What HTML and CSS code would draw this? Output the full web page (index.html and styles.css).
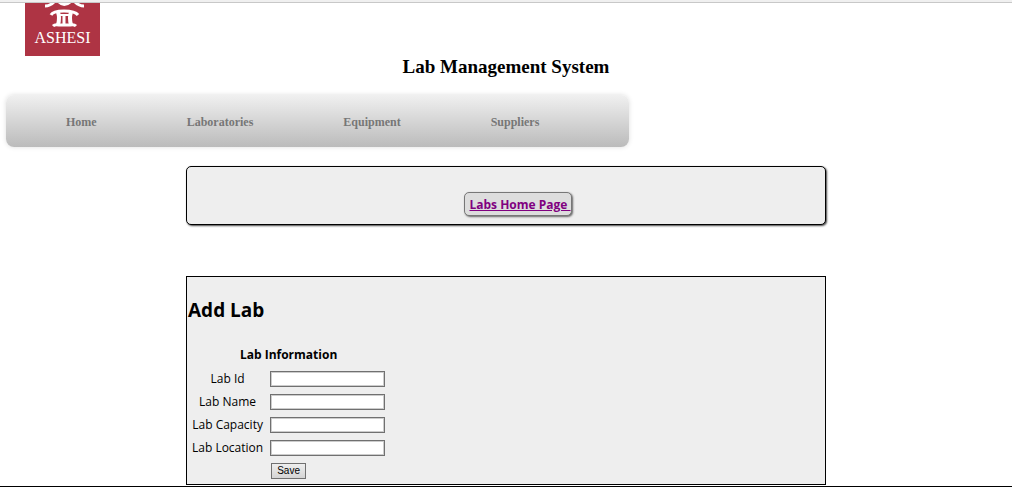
FILE: index.html
```html
<!DOCTYPE html>
<html lang="en">
<head>
<meta charset="utf-8">
<title>Lab Management System</title>
<link rel="stylesheet" href="styles.css">
</head>
<body>
<header class="masthead">
  <div class="logo">
    <svg class="logo-mark" viewBox="0 0 75 26" aria-hidden="true">
      <g fill="none" stroke="#fff">
        <path d="M29 -1Q25 3 20 3" stroke-width="3"/>
        <path d="M50 -1Q54 3 59 3" stroke-width="3"/>
        <path d="M34 -1Q39 4 45 -1" stroke-width="3"/>
        <path d="M26 12Q28 8 39 8T53 12" stroke-width="3"/>
        <path d="M33 9Q35 15 33 22M46 9Q44 15 46 22" stroke-width="4"/>
        <path d="M39 12V22" stroke-width="3"/>
        <path d="M33 12H46" stroke-width="2"/>
        <path d="M28 23Q30 21 34 22H45Q49 21 51 23" stroke-width="3"/>
      </g>
    </svg>
    <span class="logo-name">ASHESI</span>
  </div>
  <h1 class="title">Lab Management System</h1>
</header>
<nav class="menu">
  <a href="#home">Home</a>
  <a href="#laboratories">Laboratories</a>
  <a href="#equipment">Equipment</a>
  <a href="#suppliers">Suppliers</a>
</nav>
<main class="content">
  <div class="toolbar">
    <a class="tab" href="#labs">Labs Home Page&nbsp;</a>
  </div>
  <section class="panel">
    <h2 class="panel-title">Add Lab</h2>
    <form>
      <table class="form-table">
        <thead>
          <tr><th colspan="2">Lab Information</th></tr>
        </thead>
        <tbody>
          <tr><td><label for="lab-id">Lab Id</label></td><td><input class="field" id="lab-id" type="text"></td></tr>
          <tr><td><label for="lab-name">Lab Name</label></td><td><input class="field" id="lab-name" type="text"></td></tr>
          <tr><td><label for="lab-capacity">Lab Capacity</label></td><td><input class="field" id="lab-capacity" type="text"></td></tr>
          <tr><td><label for="lab-location">Lab Location</label></td><td><input class="field" id="lab-location" type="text"></td></tr>
          <tr><td></td><td><button class="save" type="submit">Save</button></td></tr>
        </tbody>
      </table>
    </form>
  </section>
</main>
<footer class="footer"></footer>
</body>
</html>
```

FILE: styles.css
```css
* {
  box-sizing: border-box;
}

body {
  margin: 0;
  background: #fff;
  color: #000;
  border-top: 2px solid #f0f0f0;
  font-family: "Liberation Serif", serif;
}

.masthead {
  border-top: 1px solid #c8c8c8;
}

.logo {
  display: flex;
  flex-direction: column;
  align-items: center;
  width: 75px;
  height: 53px;
  margin-left: 25px;
  background: #ae3444;
  color: #fff;
}

.logo-mark {
  width: 75px;
  height: 26px;
}

.logo-name {
  font-size: 16px;
  line-height: 18px;
}

.title {
  margin: 0;
  text-align: center;
  font-size: 19px;
  line-height: 22px;
}

.menu {
  display: flex;
  align-items: center;
  gap: 90px;
  width: 62%;
  max-width: 623px;
  height: 52px;
  margin: 17px 0 0 6px;
  padding: 2px 60px 0;
  border-radius: 8px;
  background: linear-gradient(#f0f0f0, #bbb);
  box-shadow: 0 0 5px #ddd;
}

.menu a {
  color: #777;
  font-size: 12px;
  font-weight: bold;
  text-decoration: none;
}

.content {
  max-width: 640px;
  margin: 19px auto 0;
  font-family: "Comic Sans MS", "Open Sans", sans-serif;
  font-size: 12px;
}

.toolbar {
  display: flex;
  justify-content: center;
  padding: 25px 0 8px 24px;
  border: 1px solid #000;
  border-radius: 5px;
  background: #eee;
  box-shadow: 1px 1px 2px #444;
}

.tab {
  padding: 4px 0 2px 4px;
  border: 1px solid #777;
  border-radius: 5px;
  background: #ddd;
  box-shadow: 1px 1px 2px #666;
  color: #800080;
  font-weight: bold;
  line-height: 16px;
}

.panel {
  margin-top: 51px;
  padding: 1px 1px 2px;
  border: 1px solid #000;
  background: #eee;
}

.panel-title {
  margin: 18px 0 19px;
  font-size: 19px;
  line-height: 28px;
}

.form-table {
  margin-left: 1px;
  border-collapse: collapse;
}

.form-table th,
.form-table td {
  height: 23px;
  padding: 0 3px;
  text-align: center;
  line-height: 18px;
}

.form-table th {
  height: 24px;
}

.form-table td:last-child {
  padding-left: 4px;
  text-align: left;
}

.field {
  display: block;
  width: 115px;
  height: 16px;
  padding: 0 1px;
  border: 1px solid #707070;
  background: #fff;
  box-shadow: inset 0 0 0 1px #ccc;
}

.save {
  display: block;
  height: 16px;
  margin-left: 1px;
  padding: 0 5px;
  border: 1px solid #707070;
  background: linear-gradient(#eee, #d4d4d4);
  color: #000;
  font-family: "Liberation Sans", sans-serif;
  font-size: 10px;
  line-height: 14px;
}

.footer {
  height: 1px;
  margin-top: 1px;
  background: #000;
}
```
